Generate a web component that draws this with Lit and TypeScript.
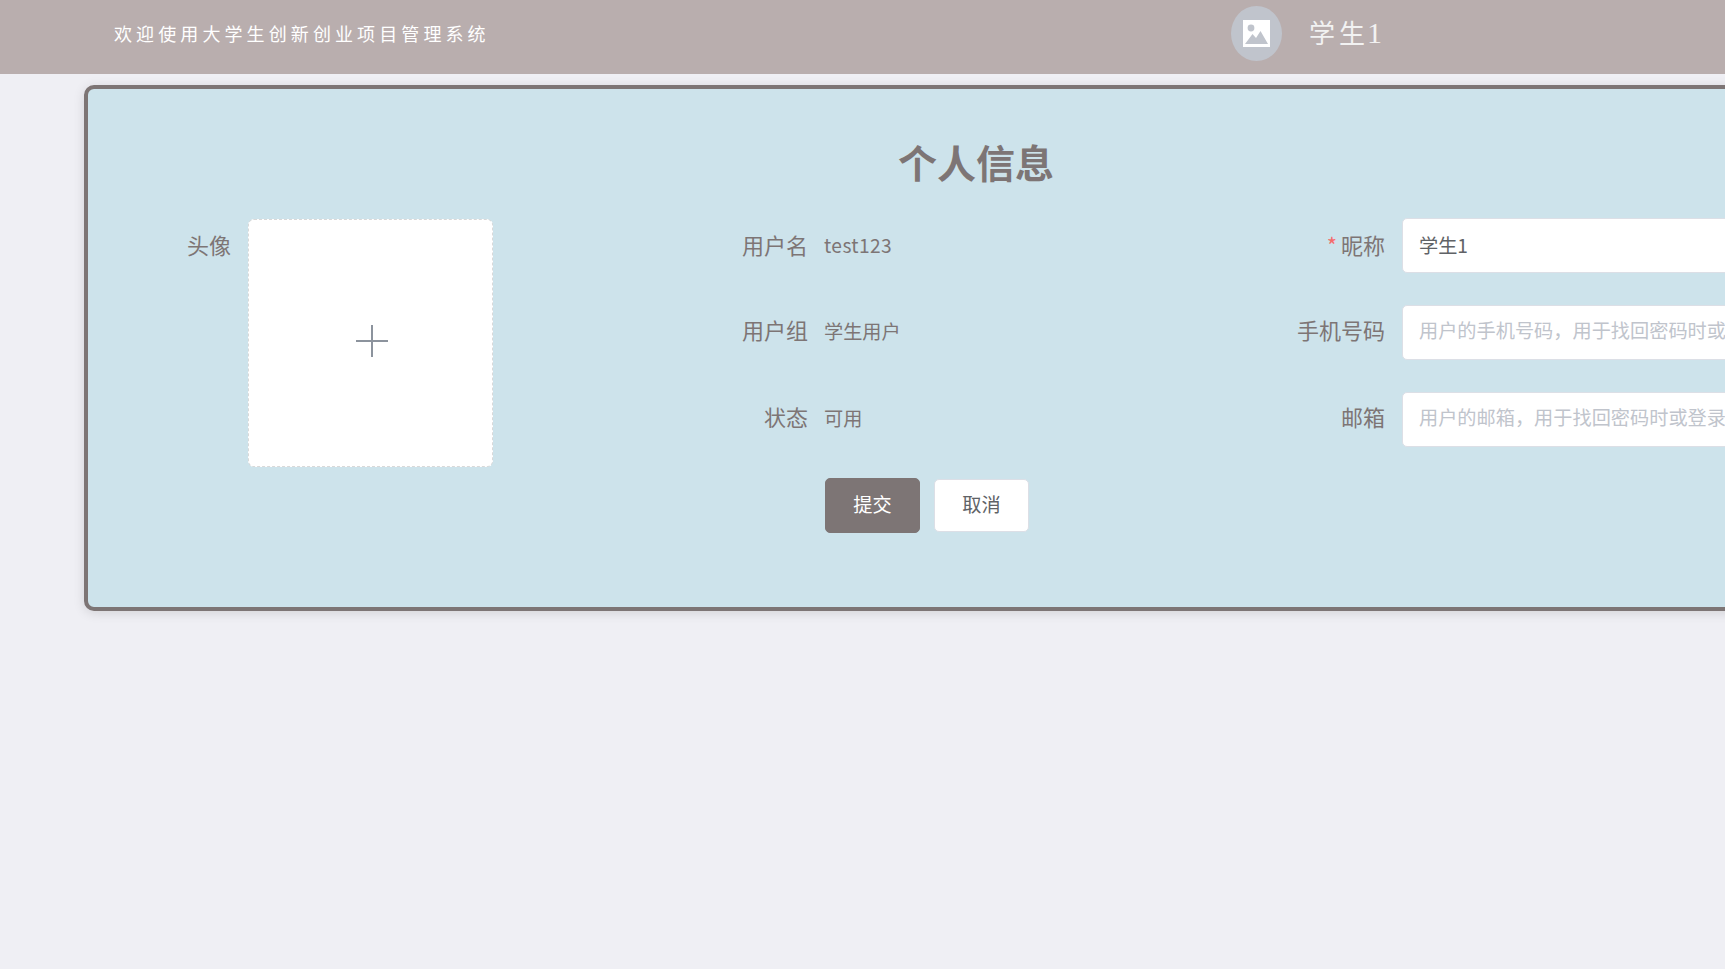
import { LitElement, html, css } from 'lit';
import { customElement } from 'lit/decorators.js';

@customElement('app-root')
export class AppRoot extends LitElement {
  static styles = css`
    :host {
      display: block;
      height: 969px;
      overflow: hidden;
      background: #efeff4;
      font-family: "Noto Sans CJK SC", "Liberation Sans", sans-serif;
      color: #7d7575;
    }

    .header {
      box-sizing: border-box;
      height: 74px;
      background: #b9aeae;
      display: flex;
      align-items: center;
      padding: 0 0 7px 114px;
      color: #fff;
      font-family: "Liberation Serif", "Noto Sans CJK SC", serif;
    }
    .welcome {
      width: 1117px;
      flex: none;
      margin-bottom: 2px;
      font-size: 18px;
      letter-spacing: 4.1px;
    }
    .avatar {
      width: 51px;
      height: 55px;
      flex: none;
      border-radius: 50%;
      background: #c0c4cc;
      display: flex;
      align-items: center;
      justify-content: center;
      margin-right: 27px;
    }
    .username {
      margin-top: 2px;
      font-size: 26px;
      line-height: 40px;
      letter-spacing: 4px;
      color: #f2f2f2;
    }
    .digit {
      margin-left: -2px;
      font-size: 30px;
      line-height: 1;
      letter-spacing: 0;
    }

    .card {
      box-sizing: border-box;
      width: 1784px;
      height: 526px;
      margin: 11px 0 0 84px;
      padding: 0 22px;
      border: 4px solid #7d7575;
      border-radius: 10px;
      background: #cde3eb;
      box-shadow: 0 2px 12px rgba(0, 0, 0, 0.12);
    }
    .title {
      margin: 0;
      height: 129px;
      padding-top: 44px;
      box-sizing: border-box;
      text-align: center;
      font-size: 39px;
      line-height: 56px;
      font-weight: 700;
    }

    .form {
      display: grid;
      grid-template-columns: repeat(3, 577px);
    }
    .field {
      display: flex;
      height: 54px;
      margin-bottom: 33px;
    }
    .label {
      box-sizing: border-box;
      width: 138px;
      flex: none;
      padding-right: 17px;
      text-align: right;
      font-size: 22px;
      line-height: 49px;
    }
    .label .star {
      color: #f56c6c;
      margin-right: 4px;
    }
    .value {
      margin-left: -1px;
      font-size: 19.2px;
      line-height: 52px;
    }
    .value.latin {
      letter-spacing: 0.4px;
    }

    /* first row text sits a little lower than the other two */
    .field.first .label {
      line-height: 52px;
    }
    .field.first .value {
      line-height: 55px;
    }
    .field.first input {
      padding-bottom: 1px;
    }

    .upload-field {
      grid-row: span 3;
      height: auto;
      margin-bottom: 0;
    }
    .upload-field .label {
      line-height: 52px;
    }
    .uploader {
      box-sizing: border-box;
      width: 245px;
      height: 248px;
      margin-top: 1px;
      padding: 0 0 4px 2px;
      border: 1px dashed #d9d9d9;
      border-radius: 6px;
      background: #fff;
      display: flex;
      align-items: center;
      justify-content: center;
    }

    input {
      box-sizing: border-box;
      width: 439px;
      height: 55px;
      padding: 0 16px 5px;
      border: 1px solid #dcdfe6;
      border-radius: 5px;
      background: #fff;
      outline: none;
      font: inherit;
      font-size: 19.2px;
      color: #606266;
    }
    input::placeholder {
      color: #c0c4cc;
    }

    .actions {
      display: flex;
      align-items: center;
      gap: 14px;
      margin-top: -1px;
      padding-left: 715px;
    }
    button {
      box-sizing: border-box;
      height: 53px;
      width: 95px;
      padding: 0 0 3px;
      border: 1px solid #dcdfe6;
      border-radius: 5px;
      background: #fff;
      font: inherit;
      font-size: 19.2px;
      color: #606266;
    }
    button.primary {
      height: 55px;
      border-color: #7d7575;
      background: #7d7575;
      color: #fff;
    }
  `;

  private renderField(label: string, content: unknown, opts: { first?: boolean; required?: boolean } = {}) {
    return html`
      <div class="field ${opts.first ? 'first' : ''}">
        <div class="label">${opts.required ? html`<span class="star">*</span>` : ''}${label}</div>
        ${content}
      </div>
    `;
  }

  render() {
    return html`
      <div class="header">
        <div class="welcome">欢迎使用大学生创新创业项目管理系统</div>
        <div class="avatar">
          <svg width="27" height="27" viewBox="0 0 27 27">
            <rect width="27" height="27" fill="#fff"></rect>
            <circle cx="8" cy="8" r="3.4" fill="#c0c4cc"></circle>
            <path d="M2 24 L9.5 14 L13 18 L17.5 11 L25 24 Z" fill="#c0c4cc"></path>
          </svg>
        </div>
        <div class="username">学生<span class="digit">1</span></div>
      </div>

      <div class="card">
        <h1 class="title">个人信息</h1>
        <div class="form">
          <div class="field upload-field">
            <div class="label">头像</div>
            <div class="uploader">
              <svg width="32" height="32" viewBox="0 0 32 32">
                <path d="M16 0 V32 M0 16 H32" stroke="#8c939d" stroke-width="2" fill="none"></path>
              </svg>
            </div>
          </div>
          ${this.renderField('用户名', html`<div class="value latin">test123</div>`, { first: true })}
          ${this.renderField('昵称', html`<input .value=${'学生1'} />`, { first: true, required: true })}
          ${this.renderField('用户组', html`<div class="value">学生用户</div>`)}
          ${this.renderField('手机号码', html`<input placeholder=${'用户的手机号码\uFF0C用于找回密码时或登录'} />`)}
          ${this.renderField('状态', html`<div class="value">可用</div>`)}
          ${this.renderField('邮箱', html`<input placeholder=${'用户的邮箱\uFF0C用于找回密码时或登录'} />`)}
        </div>
        <div class="actions">
          <button class="primary">提交</button>
          <button>取消</button>
        </div>
      </div>
    `;
  }
}
